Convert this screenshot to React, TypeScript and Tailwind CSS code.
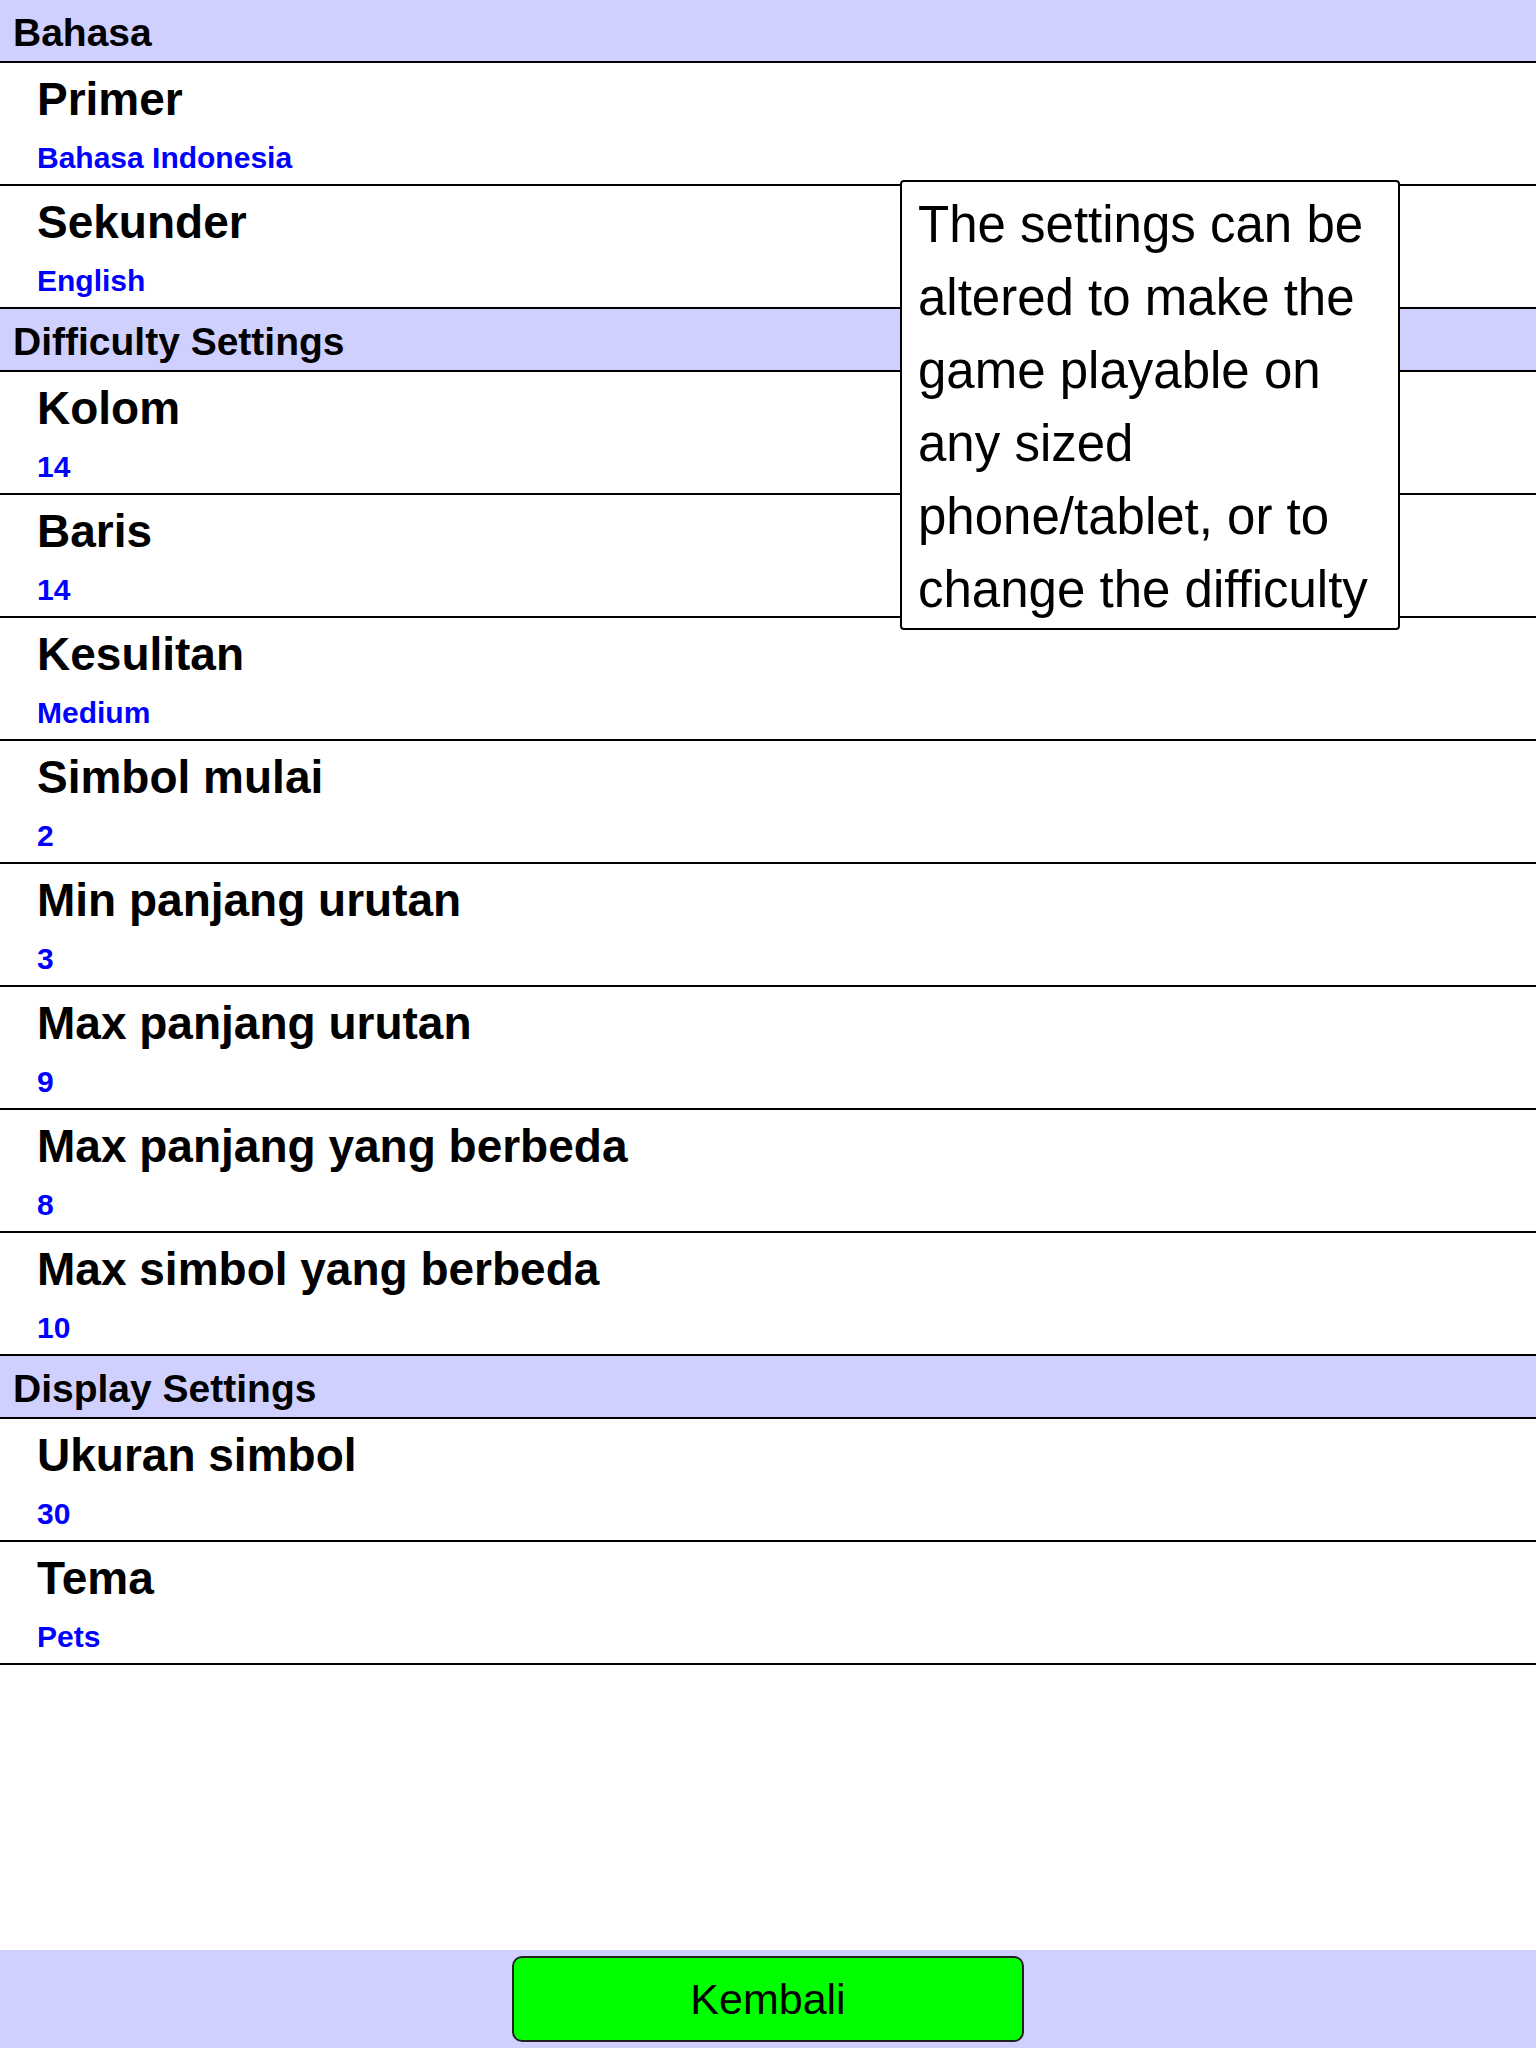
import React from 'react';

type Row = { title: string; value: string };
type Section = { heading: string; rows: Row[] };

const sections: Section[] = [
  {
    heading: 'Bahasa',
    rows: [
      { title: 'Primer', value: 'Bahasa Indonesia' },
      { title: 'Sekunder', value: 'English' },
    ],
  },
  {
    heading: 'Difficulty Settings',
    rows: [
      { title: 'Kolom', value: '14' },
      { title: 'Baris', value: '14' },
      { title: 'Kesulitan', value: 'Medium' },
      { title: 'Simbol mulai', value: '2' },
      { title: 'Min panjang urutan', value: '3' },
      { title: 'Max panjang urutan', value: '9' },
      { title: 'Max panjang yang berbeda', value: '8' },
      { title: 'Max simbol yang berbeda', value: '10' },
    ],
  },
  {
    heading: 'Display Settings',
    rows: [
      { title: 'Ukuran simbol', value: '30' },
      { title: 'Tema', value: 'Pets' },
    ],
  },
];

const SettingRow: React.FC<{ row: Row }> = ({ row }) => (
  <div className="h-[123px] border-b-2 border-black pl-[37px] pt-[13px]">
    <div className="text-[46px] font-bold leading-none text-black">{row.title}</div>
    <div className="mt-[21px] text-[30px] font-bold leading-none text-[#0000ff]">{row.value}</div>
  </div>
);

const App: React.FC = () => {
  return (
    <div
      className="relative flex h-[2048px] w-[1536px] flex-col bg-white"
      style={{ fontFamily: '"Liberation Sans", Arial, sans-serif' }}
    >
      <div className="flex flex-col">
        {sections.map((s) => (
          <div key={s.heading}>
            <div className="h-[63px] border-b-2 border-black bg-[#d0d0ff] pl-[13px] pt-[13px]">
              <div className="text-[39px] font-bold leading-none text-black">{s.heading}</div>
            </div>
            {s.rows.map((r) => (
              <SettingRow key={r.title} row={r} />
            ))}
          </div>
        ))}
      </div>

      <div className="flex-1" />

      <div className="flex h-[98px] items-center justify-center bg-[#d0d0ff]">
        <button className="flex h-[86px] w-[512px] items-center justify-center rounded-[10px] border-2 border-[#222] bg-[#00ff00] text-[43px] text-black">
          Kembali
        </button>
      </div>

      {/* tooltip over the list */}
      <div className="absolute left-[900px] top-[180px] w-[500px] rounded-[4px] border-2 border-black bg-white pl-[16px] pr-[10px] pt-[6px] pb-[2px] text-[51px] leading-[73px] text-black">
        The settings can be altered to make the game playable on any sized phone/tablet, or to change the difficulty
      </div>
    </div>
  );
};

export default App;
